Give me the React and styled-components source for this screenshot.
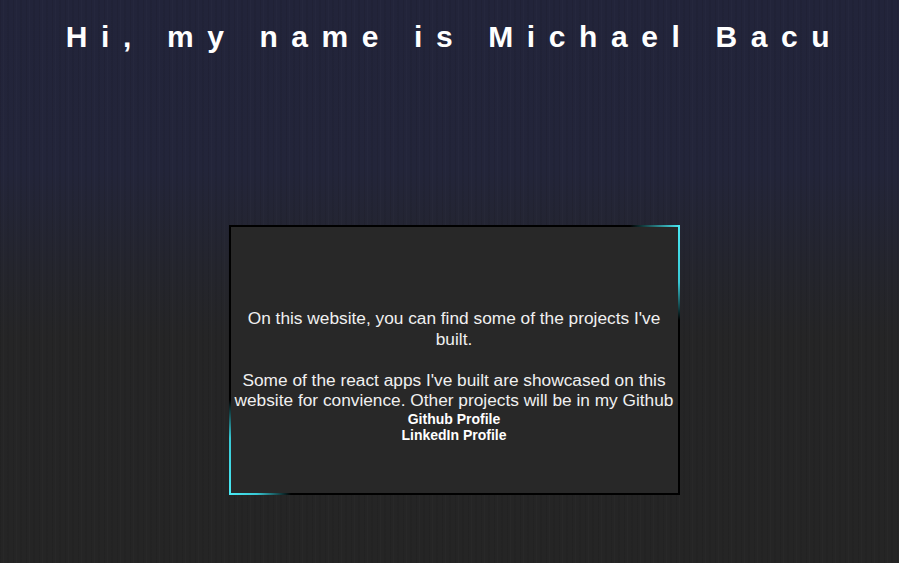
import React from "react";
import styled, { createGlobalStyle } from "styled-components";

const GlobalStyle = createGlobalStyle`
  html, body {
    margin: 0;
    padding: 0;
    height: 100%;
  }
  body {
    font-family: "Liberation Sans", Arial, sans-serif;
    background: #252525;
  }
`;

const App = () => {
  return (
    <>
      <GlobalStyle />
      <Page>
        <Title>Hi, my name is Michael Bacu</Title>
        <Card>
          <Intro>
            On this website, you can find some of the projects I've built.
            <br />
            <br />
            Some of the react apps I've built are showcased on this website for
            convience. Other projects will be in my Github
          </Intro>
          <Links>
            <LinkItem href="#">Github Profile</LinkItem>
            <LinkItem href="#">LinkedIn Profile</LinkItem>
          </Links>
        </Card>
      </Page>
    </>
  );
};

export default App;

const Page = styled.div`
  width: 100%;
  min-height: 563px;
  box-sizing: border-box;
  padding-top: 20px;
  display: flex;
  flex-direction: column;
  align-items: center;
  background:
    repeating-linear-gradient(
      90deg,
      rgba(0, 0, 0, 0.07) 0 1px,
      transparent 1px 3px,
      rgba(255, 255, 255, 0.015) 3px 4px,
      transparent 4px 7px,
      rgba(0, 0, 0, 0.05) 7px 9px,
      transparent 9px 13px
    ),
    linear-gradient(
      to bottom,
      #22243a 0%,
      #23253a 30%,
      #24252d 48%,
      #252526 60%,
      #252525 100%
    );
`;

const Title = styled.h1`
  margin: 0 0 0 10px;
  font-size: 30px;
  font-weight: bold;
  letter-spacing: 13.6px;
  line-height: 34px;
  color: #ffffff;
  text-align: center;
`;

const Card = styled.div`
  position: relative;
  margin: 171px 0 0 9px;
  width: 451px;
  height: 270px;
  box-sizing: border-box;
  border: 2px solid #000;
  background: #282828;
  display: flex;
  flex-direction: column;
  align-items: center;
  padding: 81px 0 0;
  text-align: center;

  &::before,
  &::after {
    content: "";
    position: absolute;
    height: 95px;
    pointer-events: none;
  }

  &::before {
    top: -2px;
    right: -2px;
    width: 50px;
    background:
      linear-gradient(to right, transparent, #4aeaf5) top / 100% 2px no-repeat,
      linear-gradient(to bottom, #4aeaf5, #38c8d4 60%, transparent) right /
        2px 100% no-repeat;
  }

  &::after {
    bottom: -2px;
    left: -2px;
    width: 62px;
    background:
      linear-gradient(to right, #4aeaf5, #38c8d4 45%, transparent) bottom /
        100% 2px no-repeat,
      linear-gradient(to top, #4aeaf5, #38c8d4 60%, transparent) left / 2px
        100% no-repeat;
  }
`;

const Intro = styled.p`
  margin: 0;
  font-size: 17.3px;
  line-height: 20.5px;
  color: #f0f0f0;
`;

const Links = styled.div`
  display: flex;
  flex-direction: column;
  align-items: center;
`;

const LinkItem = styled.a`
  font-size: 14px;
  font-weight: bold;
  line-height: 16px;
  color: #ffffff;
  text-decoration: none;
`;
